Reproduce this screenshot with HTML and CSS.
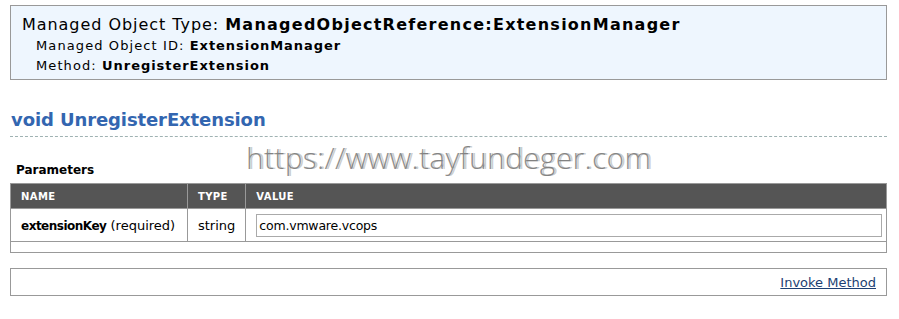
FILE: index.html
```html
<!DOCTYPE html>
<html lang="en">
<head>
  <meta charset="UTF-8">
  <title>UnregisterExtension</title>
  <link rel="stylesheet" href="styles.css">
</head>
<body>
  <!-- 对象信息 -->
  <div class="object-info">
    <div class="object-type">Managed Object Type: <b>ManagedObjectReference:ExtensionManager</b></div>
    <div class="object-line">Managed Object ID: <b>ExtensionManager</b></div>
    <div class="object-line">Method: <b>UnregisterExtension</b></div>
  </div>

  <!-- 方法名 -->
  <h1 class="method-title">void UnregisterExtension</h1>

  <div class="params">
    <h2 class="params-title">Parameters</h2>
    <div class="watermark">https://www.tayfundeger.com</div>
    <table class="param-table">
      <thead>
        <tr>
          <th class="col-name">Name</th>
          <th class="col-type">Type</th>
          <th>Value</th>
        </tr>
      </thead>
      <tbody>
        <tr>
          <td class="param-name"><b>extensionKey</b> (required)</td>
          <td>string</td>
          <td class="param-value"><input class="value-input" type="text" value="com.vmware.vcops"></td>
        </tr>
        <tr class="empty-row">
          <td colspan="3"></td>
        </tr>
      </tbody>
    </table>
  </div>

  <!-- 调用 -->
  <div class="invoke">
    <a href="#">Invoke Method</a>
  </div>
</body>
</html>
```

FILE: styles.css
```css
/* 重置样式 */
* {
  margin: 0;
  padding: 0;
  box-sizing: border-box;
}
body {
  padding: 5px 12px 0 10px;
  font-family: "DejaVu Sans", Verdana, sans-serif;
  font-size: 13px;
  color: #000;
  background: #fff;
}
/* 对象信息 */
.object-info {
  border: 1px solid #999;
  background-color: #eef6fe;
  padding: 8px 11px 3px;
  letter-spacing: 1.1px;
}
.object-type {
  font-size: 16px;
  line-height: 22px;
  letter-spacing: 0.95px;
}
.object-type b {
  letter-spacing: 1.25px;
}
.object-line {
  padding-left: 14px;
  font-size: 13px;
  line-height: 20px;
}
.object-line b {
  letter-spacing: 0.95px;
}
/* 方法名 */
.method-title {
  margin-top: 29px;
  padding: 0 0 5px 1px;
  font-size: 18px;
  line-height: 22px;
  letter-spacing: -0.1px;
  color: #3366b0;
  border-bottom: 1px dashed #9fb2b2;
}
/* 参数 */
.params {
  position: relative;
  margin-top: 25px;
}
.params-title {
  padding-left: 6px;
  font-size: 12px;
  line-height: 16px;
  margin-bottom: 5px;
}
.watermark {
  position: absolute;
  left: 236px;
  top: -22px;
  font-family: "Open Sans", sans-serif;
  font-weight: 300;
  font-size: 30px;
  line-height: 36px;
  letter-spacing: 0.3px;
  color: rgba(105, 105, 105, 0.75);
  text-shadow: 2px 0 0 rgba(170, 170, 170, 0.6);
}
.param-table {
  width: 100%;
  border-collapse: collapse;
  border: 1px solid #999;
}
.param-table th {
  height: 25px;
  padding: 0 10px;
  text-align: left;
  font-size: 10px;
  letter-spacing: 0.4px;
  text-transform: uppercase;
  color: #fff;
  background-color: #555;
  border: 1px solid #999;
  border-top: none;
}
.col-name {
  width: 177px;
}
.col-type {
  width: 58px;
}
.param-table td {
  height: 33px;
  padding: 0 10px;
  border: 1px solid #999;
  font-size: 13px;
}
.param-name {
  white-space: nowrap;
}
.param-name b {
  font-size: 12px;
  letter-spacing: -0.5px;
}
.param-table .param-value {
  padding: 0 4px 0 10px;
}
.param-table .empty-row td {
  height: 11px;
}
.value-input {
  display: block;
  width: 100%;
  height: 23px;
  padding: 0 2px;
  border: 1px solid #aaa;
  font-family: "DejaVu Sans", Verdana, sans-serif;
  font-size: 12.5px;
  letter-spacing: -0.2px;
  color: #000;
  outline: none;
}
/* 调用 */
.invoke {
  margin-top: 15px;
  height: 28px;
  border: 1px solid #999;
  padding: 5px 10px 0;
  text-align: right;
  font-size: 13px;
  line-height: 18px;
}
.invoke a {
  color: #1c3f73;
}
```
